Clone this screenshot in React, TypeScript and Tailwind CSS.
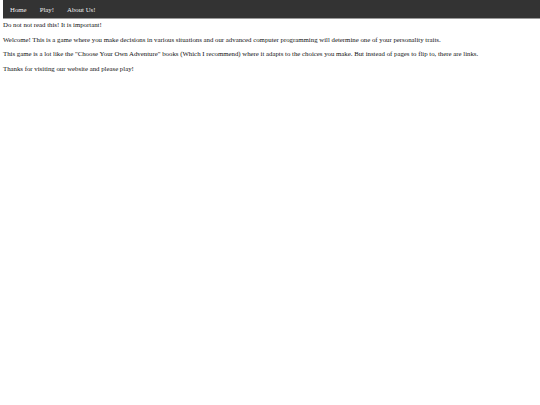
export default function App() {
  const paras = [
    "Welcome! This is a game where you make decisions in various situations and our advanced computer programming will determine one of your personality traits.",
    "This game is a lot like the \"Choose Your Own Adventure\" books (Which I recommend) where it adapts to the choices you make. But instead of pages to flip to, there are links.",
    "Thanks for visiting our website and please play!",
  ];

  return (
    <div className="min-h-screen bg-white text-[#111] font-['Liberation_Serif',serif] text-[6.8px] leading-[9px]">
      <nav className="ml-[3px] h-[19px] bg-[#333333] border-b border-[#9a9a9a] flex items-center pl-[7px] gap-[13px]">
        <a className="text-[#eeeeee]">Home</a>
        <a className="text-[#eeeeee]">Play!</a>
        <a className="text-[#eeeeee]">About Us!</a>
      </nav>
      <div className="px-[3px] pt-[1px] flex flex-col gap-[5.5px]">
        <p>Do not not read this! It is important!</p>
        {paras.map((p) => (
          <p key={p}>{p}</p>
        ))}
      </div>
    </div>
  );
}
